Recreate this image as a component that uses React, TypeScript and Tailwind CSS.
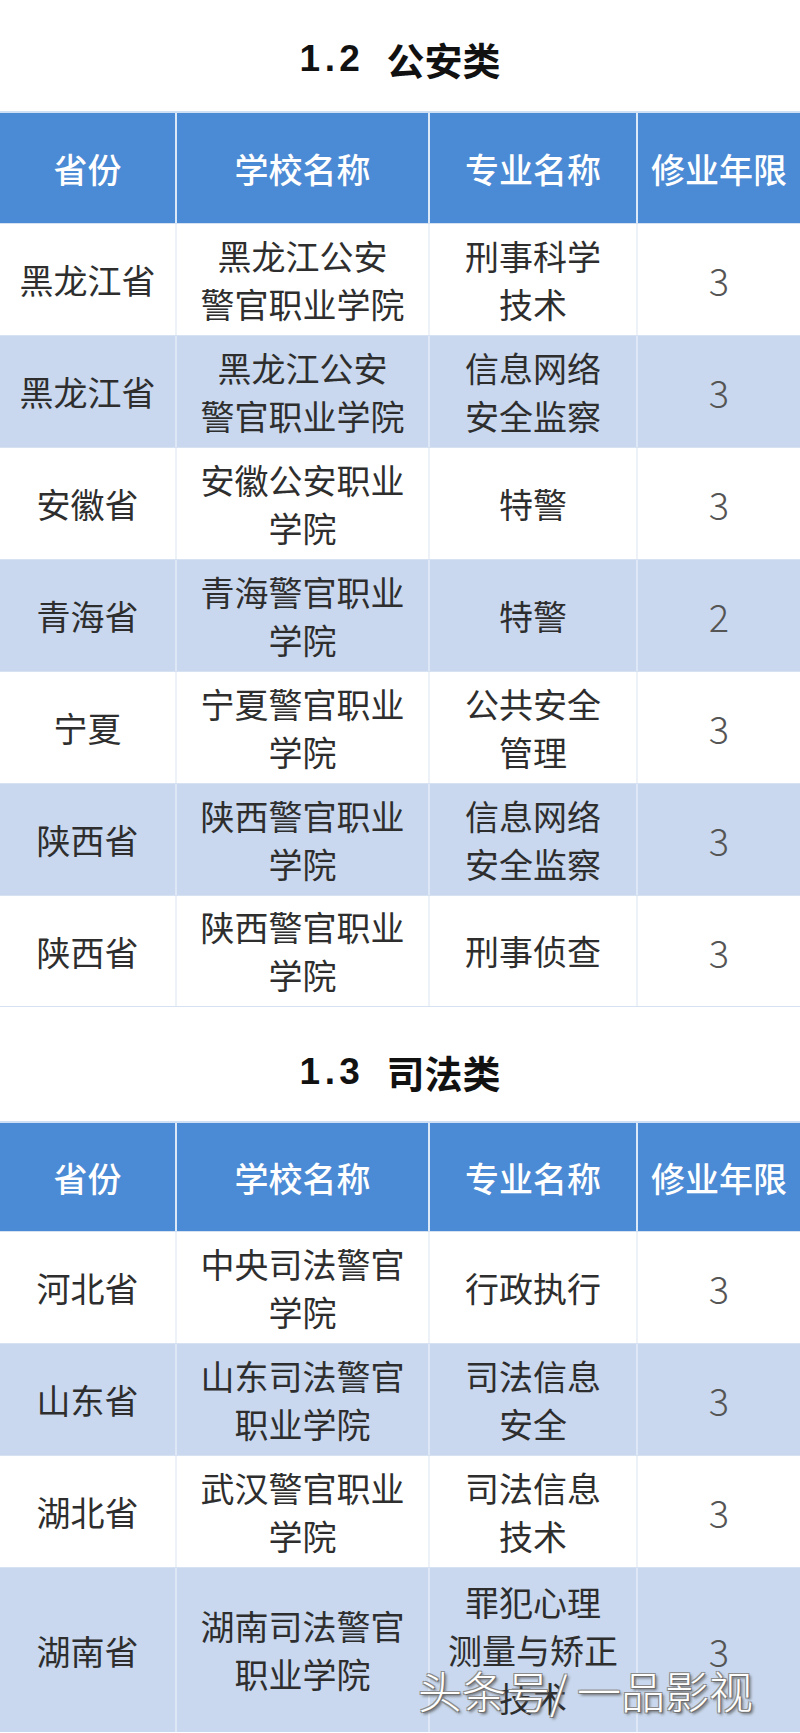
import React from "react";

type Row = {
  province: string;
  school: string[];
  major: string[];
  years: string;
  tall?: boolean;
};

const HEADERS = ["省份", "学校名称", "专业名称", "修业年限"];

const POLICE_ROWS: Row[] = [
  { province: "黑龙江省", school: ["黑龙江公安", "警官职业学院"], major: ["刑事科学", "技术"], years: "3" },
  { province: "黑龙江省", school: ["黑龙江公安", "警官职业学院"], major: ["信息网络", "安全监察"], years: "3" },
  { province: "安徽省", school: ["安徽公安职业", "学院"], major: ["特警"], years: "3" },
  { province: "青海省", school: ["青海警官职业", "学院"], major: ["特警"], years: "2" },
  { province: "宁夏", school: ["宁夏警官职业", "学院"], major: ["公共安全", "管理"], years: "3" },
  { province: "陕西省", school: ["陕西警官职业", "学院"], major: ["信息网络", "安全监察"], years: "3" },
  { province: "陕西省", school: ["陕西警官职业", "学院"], major: ["刑事侦查"], years: "3" },
];

const JUDICIAL_ROWS: Row[] = [
  { province: "河北省", school: ["中央司法警官", "学院"], major: ["行政执行"], years: "3" },
  { province: "山东省", school: ["山东司法警官", "职业学院"], major: ["司法信息", "安全"], years: "3" },
  { province: "湖北省", school: ["武汉警官职业", "学院"], major: ["司法信息", "技术"], years: "3" },
  { province: "湖南省", school: ["湖南司法警官", "职业学院"], major: ["罪犯心理", "测量与矫正", "技术"], years: "3", tall: true },
];

const FONT = { fontFamily: '"Noto Sans CJK SC", "Liberation Sans", sans-serif' };
const COLS = "grid grid-cols-[175px_253px_208px_164px]";

const Title: React.FC<{ num: string; text: string; className: string }> = ({ num, text, className }) => (
  <div className={`flex items-center justify-center gap-[22px] text-[#111] ${className}`}>
    <span className="text-[37px] font-bold tracking-[0.12em]" style={{ fontFamily: '"Liberation Sans", sans-serif' }}>
      {num}
    </span>
    <span className="text-[38px] font-bold leading-none">{text}</span>
  </div>
);

const Header: React.FC<{ height: string }> = ({ height }) => (
  <div className={`${COLS} ${height} bg-[#4b8ad4] border-t-2 border-[#cfe0f5]`}>
    {HEADERS.map((h, i) => (
      <div
        key={h}
        className={`flex items-center justify-center text-[34px] font-medium text-white ${
          i > 0 ? "border-l-2 border-[#dbe8f8]" : ""
        }`}
      >
        {h}
      </div>
    ))}
  </div>
);

const Lines: React.FC<{ lines: string[] }> = ({ lines }) => (
  <div className="flex flex-col items-center">
    {lines.map((l, i) => (
      <span key={i} className="leading-[48px]">
        {l}
      </span>
    ))}
  </div>
);

const TableRow: React.FC<{ row: Row; shaded: boolean; last?: boolean }> = ({ row, shaded, last }) => {
  const bg = shaded ? "bg-[#c9d8ee]" : "bg-white";
  const sep = shaded ? "border-[#dde7f5]" : "border-[#edf2f9]";
  const cell = "flex items-center justify-center";
  return (
    <div
      className={`${COLS} ${row.tall ? "h-[165px]" : "h-[112px]"} ${bg} border-t border-[#d6e2f2] ${
        last ? "border-b" : ""
      } text-[34px] text-[#2e2e2e]`}
    >
      <div className={cell}>{row.province}</div>
      <div className={`${cell} border-l-2 ${sep}`}>
        <Lines lines={row.school} />
      </div>
      <div className={`${cell} border-l-2 ${sep}`}>
        <Lines lines={row.major} />
      </div>
      <div className={`${cell} border-l-2 ${sep} text-[38px] font-light text-[#555]`}>{row.years}</div>
    </div>
  );
};

export default function App() {
  return (
    <div className="relative w-[800px] h-[1733px] overflow-hidden bg-white" style={FONT}>
      {/* 1.2 公安类 */}
      <Title num="1.2" text="公安类" className="h-[111px] pt-[6px]" />
      <Header height="h-[112px]" />
      {POLICE_ROWS.map((r, i) => (
        <TableRow key={i} row={r} shaded={i % 2 === 1} last={i === POLICE_ROWS.length - 1} />
      ))}

      {/* 1.3 司法类 */}
      <Title num="1.3" text="司法类" className="h-[114px] pt-[16px]" />
      <Header height="h-[110px]" />
      {JUDICIAL_ROWS.map((r, i) => (
        <TableRow key={i} row={r} shaded={i % 2 === 1} />
      ))}

      {/* 水印 */}
      <div
        className="absolute left-[418px] top-[1668px] text-[44px] font-light leading-none text-white"
        style={{
          textShadow:
            "1px 1px 0 #6e6e6e, -1px -1px 0 #8c8c8c, 1px -1px 0 #8c8c8c, -1px 1px 0 #8c8c8c, 2px 2px 3px #555",
        }}
      >
        头条号/ 一品影视
      </div>
    </div>
  );
}
